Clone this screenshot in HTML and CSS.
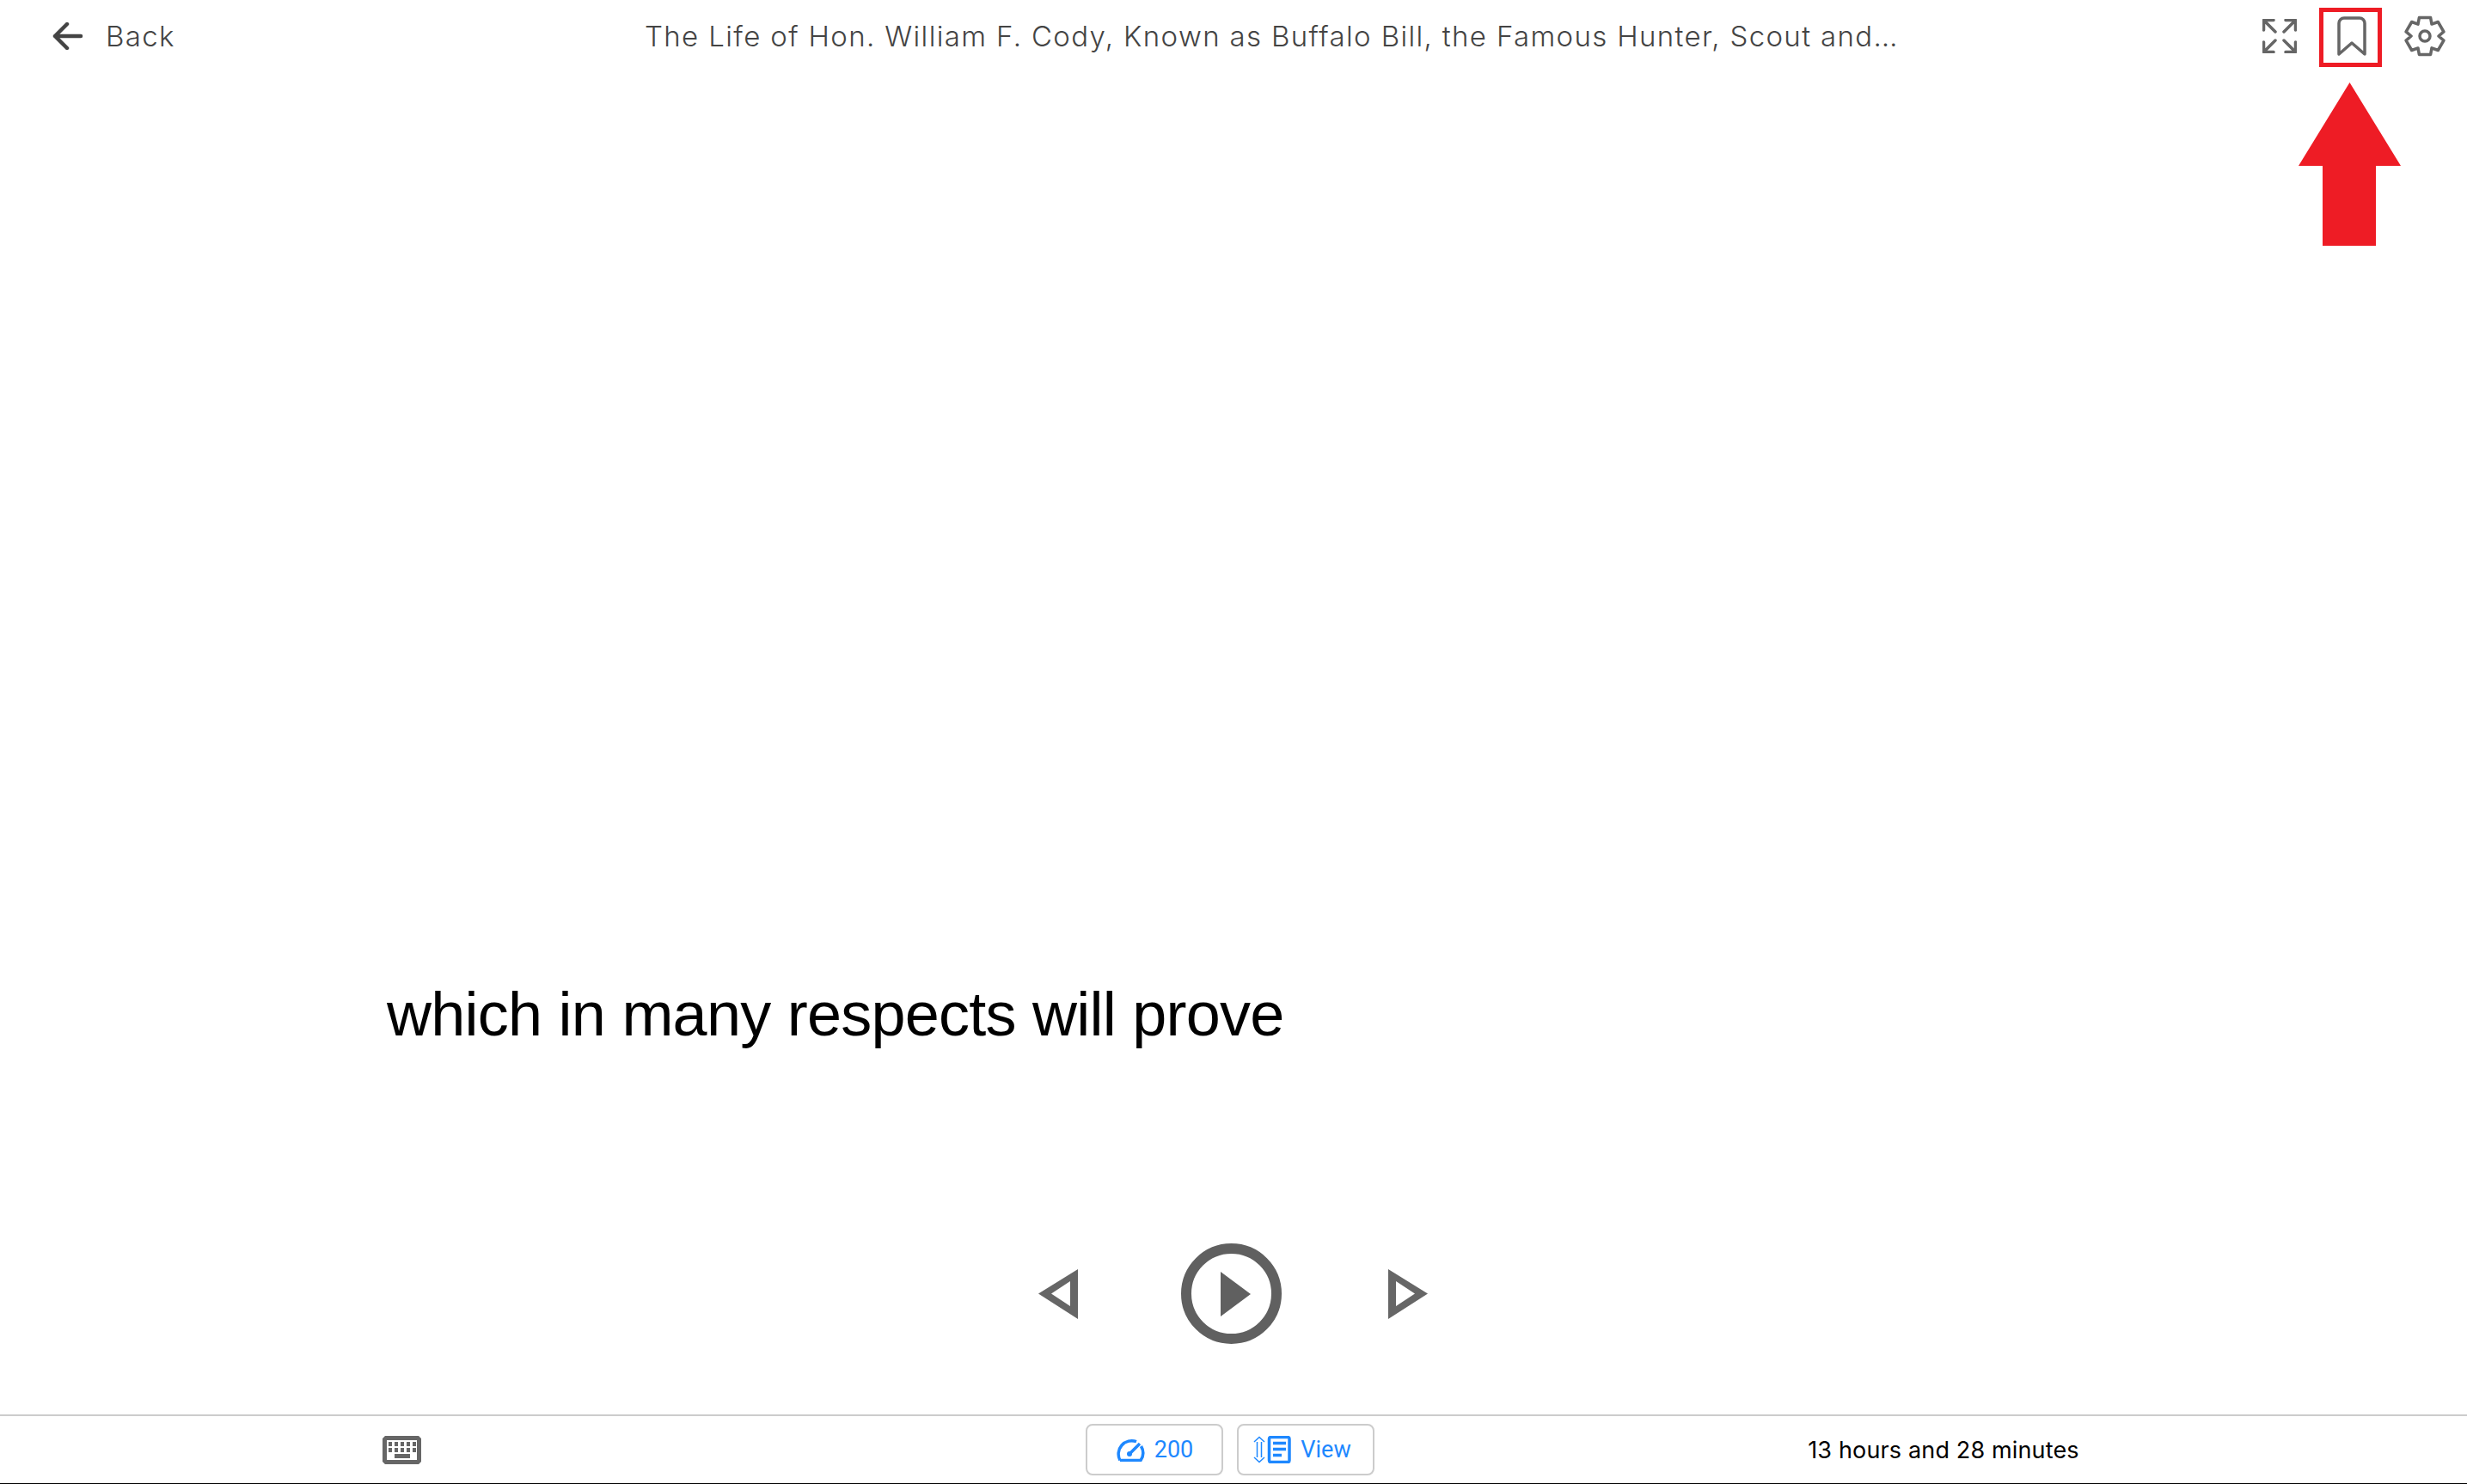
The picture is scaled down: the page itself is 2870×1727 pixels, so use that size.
FILE: index.html
```html
<!DOCTYPE html>
<html>
<head>
    <title>Reader</title>
    <link rel="stylesheet" href="styles.css">
</head>
<body>
    <div class="page">
        <!-- top bar -->
        <header class="topbar">
            <div class="back">
                <svg class="icon-back" width="36" height="32" viewBox="0 0 36 32">
                    <path d="M3 16H33M17 2L3 16L17 30"/>
                </svg>
                <span>Back</span>
            </div>
            <div class="title">The Life of Hon. William F. Cody, Known as Buffalo Bill, the Famous Hunter, Scout and…</div>
            <div class="tools">
                <svg class="icon-line" width="40" height="40" viewBox="0 0 40 40">
                    <path d="M1.5 13V1.5H13M2 2L15 15M27 1.5H38.5V13M38 2L25 15M1.5 27V38.5H13M2 38L15 25M38.5 27V38.5H27M38 38L25 25"/>
                </svg>
                <svg class="icon-line bookmark" width="34" height="46" viewBox="0 0 34 46">
                    <path d="M2 44V8A6 6 0 0 1 8 2H26A6 6 0 0 1 32 8V44L17 31Z"/>
                </svg>
                <svg class="icon-line" width="48" height="48" viewBox="-24 -24 48 48">
                    <path d="M-6.6 -21.5H6.6L8 -13.9L15.3 -16.5L21.9 -5.1L16 0L21.9 5.1L15.3 16.5L8 13.9L6.6 21.5H-6.6L-8 13.9L-15.3 16.5L-21.9 5.1L-16 0L-21.9 -5.1L-15.3 -16.5L-8 -13.9Z"/>
                    <circle cx="0" cy="0" r="6"/>
                </svg>
            </div>
        </header>

        <!-- reading area -->
        <main class="stage">
            <div class="line">which in many respects will prove</div>
            <div class="player">
                <svg class="icon-solid" width="46" height="58" viewBox="0 0 46 58">
                    <path fill-rule="evenodd" d="M0 28.5L46 0V58ZM15 28.5L37 43V14Z"/>
                </svg>
                <svg class="play" width="117" height="117" viewBox="0 0 117 117">
                    <circle cx="58.5" cy="58.5" r="52.5"/>
                    <path d="M46 33L81 59L46 85Z"/>
                </svg>
                <svg class="icon-solid next" width="46" height="58" viewBox="0 0 46 58">
                    <path fill-rule="evenodd" d="M46 28.5L0 0V58ZM31 28.5L9 43V14Z"/>
                </svg>
            </div>
        </main>

        <!-- bottom bar -->
        <footer class="bottombar">
            <div class="cell">
                <svg class="icon-solid" width="45" height="33" viewBox="0 0 45 33">
                    <path fill-rule="evenodd" d="M3 0H42L45 3V30L42 33H3L0 30V3ZM5 5V28H40V5Z"/>
                    <path d="M7 7h4v5H7zM14 7h4v5h-4zM21 7h4v5h-4zM28 7h4v5h-4zM35 7h4v5h-4zM7 14h4v5H7zM14 14h4v5h-4zM21 14h4v5h-4zM28 14h4v5h-4zM35 14h4v5h-4zM14 21h18v5H14z"/>
                </svg>
            </div>
            <div class="cell buttons">
                <button class="pill">
                    <svg class="icon-blue" width="34" height="27" viewBox="0 0 34 27">
                        <path d="M5 25.5A15.5 15.5 0 0 1 24 3.6M29.5 9A15.5 15.5 0 0 1 29 25.5H5M15 19L28 6"/>
                        <circle class="dot" cx="16" cy="18" r="3"/>
                    </svg>
                    <span>200</span>
                </button>
                <button class="pill view">
                    <svg class="icon-blue" width="44" height="32" viewBox="0 0 44 32">
                        <path class="thin" d="M1 7L7 1.5L13 7M1 25L7 30.5L13 25M4.5 7V25M9.5 7V25"/>
                        <rect x="18.5" y="1.5" width="23.5" height="29" rx="2"/>
                        <path d="M23 8.5H38M23 15.5H38M23 22.5H33"/>
                    </svg>
                    <span>View</span>
                </button>
            </div>
            <div class="cell time">13 hours and 28 minutes</div>
        </footer>

        <!-- annotation on top of the screenshot -->
        <div class="mark-box"></div>
        <svg class="mark-arrow" width="119" height="190" viewBox="0 0 119 190">
            <path d="M59.5 0L119 97H90V190H28V97H0Z"/>
        </svg>
    </div>
</body>
</html>
```

FILE: styles.css
```css
html, body {
    margin: 0;
    padding: 0;
    background: #fff;
}
.page {
    position: relative;
    display: flex;
    flex-direction: column;
    height: 1727px;
    overflow: hidden;
    font-family: Inter, 'Open Sans', sans-serif;
}
.topbar {
    display: flex;
    align-items: center;
    height: 84px;
    color: #444;
    font-size: 33px;
    font-weight: 300;
    letter-spacing: 1.35px;
}
.back {
    display: flex;
    align-items: center;
    gap: 26px;
    width: 750px;
    padding-left: 61px;
    box-sizing: border-box;
}
.title {
    white-space: nowrap;
}
.tools {
    display: flex;
    align-items: center;
    gap: 44px;
    margin-left: auto;
    padding-right: 25px;
}
.bookmark {
    margin-left: 3px;
}
.icon-back {
    fill: none;
    stroke: #444;
    stroke-width: 4.5;
    stroke-linecap: round;
    stroke-linejoin: round;
}
.icon-line {
    fill: none;
    stroke: #666;
    stroke-width: 3.5;
    stroke-linecap: round;
    stroke-linejoin: round;
}
.icon-solid {
    fill: #666;
}
.stage {
    flex: 1;
    display: flex;
    flex-direction: column;
    justify-content: flex-end;
    padding-bottom: 82px;
}
.line {
    height: 100px;
    line-height: 100px;
    margin-bottom: 217px;
    padding-left: 450px;
    font-family: 'Liberation Sans', Arial, sans-serif;
    font-size: 72px;
    letter-spacing: -0.75px;
    color: #000;
}
.player {
    display: flex;
    align-items: center;
    justify-content: center;
    gap: 120px;
    padding-right: 2px;
}
.next {
    margin-left: 4px;
}
.play circle {
    fill: none;
    stroke: #606060;
    stroke-width: 12;
}
.play path {
    fill: #606060;
}
.bottombar {
    display: grid;
    grid-template-columns: 934px 994px 666px;
    align-items: center;
    height: 81px;
    box-sizing: border-box;
    border-top: 2px solid #ccc;
    border-bottom: 1px solid #000;
}
.cell {
    display: flex;
    justify-content: center;
    align-items: center;
}
.buttons {
    gap: 16px;
}
.pill {
    display: flex;
    align-items: center;
    justify-content: center;
    gap: 11px;
    width: 160px;
    height: 60px;
    padding: 0;
    background: #fff;
    border: 2px solid #ccc;
    border-radius: 8px;
    color: #1e88ff;
    font-family: Roboto, sans-serif;
    font-size: 27px;
}
.view {
    padding-right: 8px;
}
.icon-blue {
    fill: none;
    stroke: #1e88ff;
    stroke-width: 3.5;
}
.icon-blue .thin {
    stroke-width: 1.5;
}
.icon-blue .dot {
    fill: #1e88ff;
    stroke: none;
}
.time {
    font-size: 27px;
    font-weight: 400;
    letter-spacing: 0.15px;
    color: #000;
    white-space: nowrap;
}
.mark-box {
    position: absolute;
    left: 2698px;
    top: 9px;
    width: 73px;
    height: 69px;
    box-sizing: border-box;
    border: 5px solid #ee1c25;
}
.mark-arrow {
    position: absolute;
    left: 2674px;
    top: 96px;
    fill: #ee1c25;
}
```
